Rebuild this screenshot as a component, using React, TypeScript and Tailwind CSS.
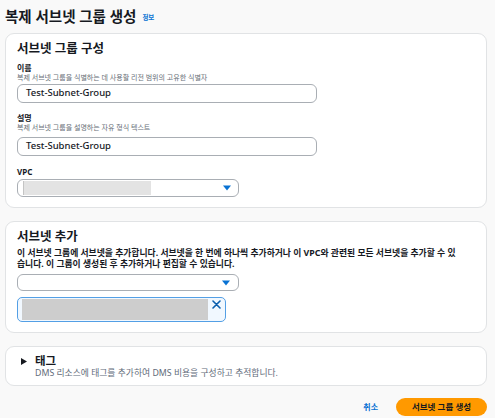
const font = { fontFamily: '"Noto Sans", "Noto Sans CJK KR", sans-serif' };

function Caret() {
  return (
    <svg width="8" height="6" viewBox="0 0 8 6" className="shrink-0">
      <polygon points="0,0.5 8,0.5 4,5.5" fill="#0972d3" />
    </svg>
  );
}

function Label({ title, desc }: { title: string; desc?: string }) {
  return (
    <>
      <div className="h-[11px] text-[8px] font-bold leading-[11px] text-[#16191f]">{title}</div>
      {desc && <div className="h-[10px] text-[7px] leading-[10px] text-[#687078]">{desc}</div>}
    </>
  );
}

function TextInput({ value }: { value: string }) {
  return (
    <div className="flex h-[19px] w-[300px] items-center rounded-[6px] border border-[#a9aeb4] bg-white pl-[8px] text-[9.5px] font-medium text-[#16191f]">
      {value}
    </div>
  );
}

export default function App() {
  return (
    <div className="h-[418px] w-[495px] overflow-hidden bg-[#f9f9f9] px-[5px]" style={font}>
      {/* header */}
      <div className="flex h-[33px] items-center gap-[6px]">
        <h1 className="text-[14.5px] font-bold leading-none text-[#16191f]">복제 서브넷 그룹 생성</h1>
        <span className="mt-[2px] text-[6.5px] font-bold text-[#0972d3]">정보</span>
      </div>

      {/* 서브넷 그룹 구성 */}
      <div className="w-[482px] rounded-[9px] border border-[#e1e3e5] bg-white pb-[10px] pl-[11px] pt-[7px]">
        <h2 className="h-[16px] text-[12.5px] font-semibold leading-[16px] text-[#16191f]">서브넷 그룹 구성</h2>
        <div className="mt-[5px]">
          <Label title="이름" desc="복제 서브넷 그룹을 식별하는 데 사용할 리전 범위의 고유한 식별자" />
        </div>
        <div className="mt-[1px]">
          <TextInput value="Test-Subnet-Group" />
        </div>
        <div className="mt-[9px]">
          <Label title="설명" desc="복제 서브넷 그룹을 설명하는 자유 형식 텍스트" />
        </div>
        <div className="mt-[4px]">
          <TextInput value="Test-Subnet-Group" />
        </div>
        <div className="mt-[10px]">
          <Label title="VPC" />
        </div>
        <div className="mt-[2px] flex h-[18px] w-[222px] items-center rounded-[6px] border border-[#a9aeb4] bg-white pr-[7px]">
          <div className="ml-[5px] h-[14px] w-[128px] border-l border-[#c4c4c4] bg-[#e3e3e3]" />
          <div className="flex-1" />
          <Caret />
        </div>
      </div>

      {/* 서브넷 추가 */}
      <div className="mt-[13px] w-[482px] rounded-[9px] border border-[#e1e3e5] bg-white pb-[10px] pl-[11px] pt-[7px]">
        <h2 className="h-[16px] text-[12.5px] font-semibold leading-[16px] text-[#16191f]">서브넷 추가</h2>
        <p className="mt-[3px] whitespace-nowrap text-[8.8px] font-bold leading-[11px] text-[#16191f]">
          이 서브넷 그룹에 서브넷을 추가합니다. 서브넷을 한 번에 하나씩 추가하거나 이 VPC와 관련된 모든 서브넷을 추가할 수 있
          <br />
          습니다. 이 그룹이 생성된 후 추가하거나 편집할 수 있습니다.
        </p>
        <div className="mt-[4px] flex h-[17px] w-[222px] items-center justify-end rounded-[6px] border border-[#a9aeb4] bg-white pr-[8px]">
          <Caret />
        </div>
        <div className="mt-[6px] flex h-[25px] w-[209px] overflow-hidden rounded-[5px] border-[1.5px] border-[#539fe5] bg-[#f1f8ff]">
          <div className="my-[1px] ml-[4px] w-[186px] bg-[#cdcdcd]" />
          <div className="flex flex-1 justify-center pt-[2px]">
            <svg width="9" height="9" viewBox="0 0 9 9">
              <path d="M1 1 L8 8 M8 1 L1 8" stroke="#0b5fae" strokeWidth="1.6" strokeLinecap="round" />
            </svg>
          </div>
        </div>
      </div>

      {/* 태그 */}
      <div className="mt-[13px] w-[482px] rounded-[9px] border border-[#e1e3e5] bg-white pb-[7px] pl-[15px] pt-[7px]">
        <div className="flex h-[14px] items-center gap-[8px]">
          <svg width="6" height="7" viewBox="0 0 6 7">
            <polygon points="0,0 6,3.5 0,7" fill="#16191f" />
          </svg>
          <span className="text-[11.5px] font-bold leading-none text-[#16191f]">태그</span>
        </div>
        <div className="ml-[14px] h-[10px] text-[8.8px] leading-[10px] text-[#5f6b7a]">
          DMS 리소스에 태그를 추가하여 DMS 비용을 구성하고 추적합니다.
        </div>
      </div>

      {/* actions */}
      <div className="mt-[12px] flex w-[482px] items-center justify-end gap-[18px]">
        <span className="text-[8px] font-bold text-[#0972d3]">취소</span>
        <button className="flex h-[18px] w-[91px] items-center justify-center rounded-full bg-[#ff9900] text-[8.5px] font-bold text-[#16191f]">
          서브넷 그룹 생성
        </button>
      </div>
    </div>
  );
}
